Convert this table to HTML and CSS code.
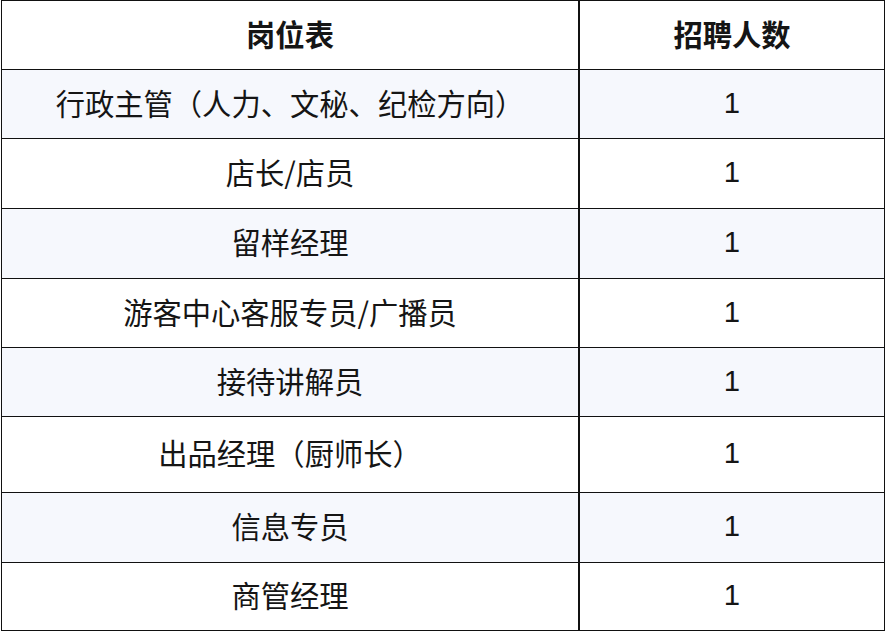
FILE: index.html
```html
<!DOCTYPE html>
<html lang="zh-CN">
<head>
<meta charset="utf-8">
<title>岗位表</title>
<link rel="stylesheet" href="styles.css">
</head>
<body>
<div class="table">
  <div class="cell head">岗位表</div><div class="cell head num">招聘人数</div>
  <div class="cell alt">行政主管（人力、文秘、纪检方向）</div><div class="cell alt num">1</div>
  <div class="cell">店长/店员</div><div class="cell num">1</div>
  <div class="cell alt">留样经理</div><div class="cell alt num">1</div>
  <div class="cell">游客中心客服专员/广播员</div><div class="cell num">1</div>
  <div class="cell alt">接待讲解员</div><div class="cell alt num">1</div>
  <div class="cell">出品经理（厨师长）</div><div class="cell num">1</div>
  <div class="cell alt">信息专员</div><div class="cell alt num">1</div>
  <div class="cell">商管经理</div><div class="cell num">1</div>
</div>
</body>
</html>
```
FILE: styles.css
```css
html, body {
  margin: 0;
  padding: 0;
  background: #ffffff;
}
body {
  padding-left: 1px;
  font-family: "Noto Sans CJK SC", "Noto Sans", sans-serif;
  color: #151515;
}
.table {
  display: grid;
  grid-template-columns: 577px 306px;
  grid-template-rows: 69px 69px 70px 70px 69px 69px 76px 70px 68px;
  width: 884px;
  border-top: 1px solid #111;
  border-left: 1px solid #111;
  box-sizing: border-box;
  height: 631px;
}
.cell {
  display: flex;
  align-items: center;
  justify-content: center;
  padding-bottom: 3px;
  border-right: 1px solid #111;
  border-bottom: 1px solid #111;
  font-size: 29.3px;
  line-height: 1;
  background: #ffffff;
}
.cell.num {
  border-left: 1px solid #111;
  font-family: "Liberation Sans", "Noto Sans CJK SC", sans-serif;
}
.cell.head {
  font-weight: 700;
  font-family: "Noto Sans CJK SC", sans-serif;
}
.cell.alt {
  background: #f6f8fd;
}
```
